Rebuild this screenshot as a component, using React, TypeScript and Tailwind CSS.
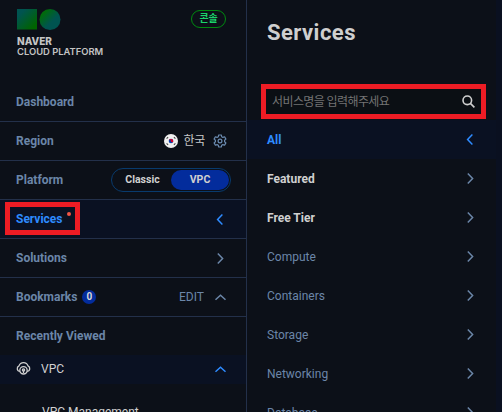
import type { ReactNode } from "react";

type Direction = "left" | "right" | "up";

const chevronPaths: Record<Direction, string> = {
  left: "M8.4 1.6 3.6 6.5l4.8 4.9",
  right: "M3.8 1.6l4.8 4.9-4.8 4.9",
  up: "M1.5 8.8 6.5 4.3 11.5 8.8",
};

function Chevron({ dir, className = "" }: { dir: Direction; className?: string }) {
  return (
    <svg viewBox="0 0 13 13" className={`h-[13px] w-[13px] shrink-0 ${className}`} fill="none" stroke="currentColor" strokeWidth="1.5">
      <path d={chevronPaths[dir]} />
    </svg>
  );
}

function Logo() {
  return (
    <svg viewBox="0 0 44 21" className="h-[21px] w-11">
      <defs>
        <linearGradient id="sq" x1="0" y1="0" x2="1" y2="1">
          <stop offset="0.2" stopColor="#005450" />
          <stop offset="0.85" stopColor="#006400" />
        </linearGradient>
        <linearGradient id="ci" x1="0" y1="0" x2="1" y2="1">
          <stop offset="0.2" stopColor="#006b0c" />
          <stop offset="0.6" stopColor="#005450" />
        </linearGradient>
      </defs>
      <rect width="20" height="20.5" fill="url(#sq)" />
      <circle cx="33" cy="10.5" r="10.5" fill="url(#ci)" />
    </svg>
  );
}

function KoreaFlag() {
  return (
    <svg viewBox="0 0 14 14" className="h-3.5 w-3.5">
      <circle cx="7" cy="7" r="7" fill="#f0f0f0" />
      <circle cx="7" cy="7" r="2.3" fill="#0b3fa8" />
      <path d="M4.7 7.2a2.3 2.3 0 0 1 4.6 0 1.15 1.15 0 0 1-2.3 0 1.15 1.15 0 0 0-2.3 0z" fill="#d80027" />
      <path d="M2.6 4.7l1.5-1.5M9.900 3.200l1.500 1.500M2.600 9.300l1.500 1.500M9.900 10.800l1.500-1.500" stroke="#444" strokeWidth="1.1" />
    </svg>
  );
}

function Gear() {
  return (
    <svg viewBox="0 0 14 14" className="h-3.5 w-3.5 text-[#6b8bb0]" fill="none" stroke="currentColor" strokeWidth="1.2" strokeLinejoin="round">
      <path d="M5.700 1h2.600l.400 1.700 1.200.700 1.700-.600 1.300 2.300-1.300 1.200v1.400l1.300 1.200-1.300 2.300-1.700-.600-1.200.700L8.300 13H5.700l-.400-1.700-1.200-.700-1.700.600-1.300-2.300 1.300-1.200V6.300L1.100 5.100l1.300-2.300 1.700.600 1.200-.700z" />
      <circle cx="7" cy="7" r="1.900" />
    </svg>
  );
}

function CloudIcon() {
  return (
    <svg viewBox="0 0 15 14" className="h-3.5 w-[15px] -translate-y-px" fill="none" stroke="currentColor" strokeWidth="1.3">
      <path d="M3.800 10.600A3 3 0 0 1 3 4.900 4.700 4.700 0 0 1 12 4.900a3 3 0 0 1-.800 5.700" />
      <circle cx="7.500" cy="9.300" r="3.700" />
      <circle cx="7.500" cy="9" r="1.100" />
      <path d="M7.500 9.500v2.500" />
    </svg>
  );
}

function NavRow({ label, active, extra, children }: { label: string; active?: boolean; extra?: ReactNode; children?: ReactNode }) {
  return (
    <div className={`flex h-[39px] items-center border-b border-[#23304a] pr-[19px] pl-4 ${active ? "bg-[#0a1122]" : ""}`}>
      <span className={`font-bold ${active ? "text-[#2e8bff]" : "text-[#6b86a8]"}`}>{label}</span>
      {extra}
      <div className="ml-auto flex items-center">{children}</div>
    </div>
  );
}

const services = [
  { name: "Featured", strong: true },
  { name: "Free Tier", strong: true },
  { name: "Compute" },
  { name: "Containers" },
  { name: "Storage" },
  { name: "Networking" },
  { name: "Database" },
];

export default function App() {
  return (
    <div className="relative flex h-[412px] w-[502px] overflow-hidden bg-[#0a1020] font-['Roboto','Noto_Sans_CJK_KR',sans-serif] text-[12px] leading-4">
      <aside className="w-[247px] shrink-0 border-r border-[#23304a] bg-[#0c1018]">
        <header className="flex h-[83px] items-start justify-between pt-[9px] pr-5 pl-[17px]">
          <div>
            <Logo />
            <div className="mt-[6px] font-['Inter',sans-serif] text-[10px] leading-[10.500px] text-[#c4c4c4]">
              <div className="font-extrabold">NAVER</div>
              <div className="text-[9.400px] font-semibold">CLOUD PLATFORM</div>
            </div>
          </div>
          <span className="mt-px flex h-[18px] w-[35px] items-center justify-center rounded-full border border-[#008a10] text-[10px] font-bold tracking-[-0.200px] text-[#1bd36b]">콘솔</span>
        </header>
        <NavRow label="Dashboard" />
        <NavRow label="Region">
          <KoreaFlag />
          <span className="mr-2 ml-[6px] tracking-[-0.300px] text-[#c8c8c8]">한국</span>
          <Gear />
        </NavRow>
        <NavRow label="Platform">
          <div className="-mr-[4px] flex h-6 w-[120px] items-center rounded-full border border-[#083a6c] p-px text-[10.500px] font-bold text-[#d0d0d0]">
            <span className="flex-1 pl-px text-center">Classic</span>
            <span className="flex h-5 w-[58px] items-center justify-center rounded-full bg-[#032c9c]">VPC</span>
          </div>
        </NavRow>
        <NavRow label="Services" active extra={<i className="mb-[10px] ml-1 h-1 w-1 rounded-full bg-[#f25545]" />}>
          <Chevron dir="left" className="text-[#2e8bff]" />
        </NavRow>
        <NavRow label="Solutions">
          <Chevron dir="right" className="text-[#6b86a8]" />
        </NavRow>
        <NavRow
          label="Bookmarks"
          extra={<span className="ml-[5px] flex h-3.5 w-3.5 items-center justify-center rounded-full bg-[#032c9c] text-[10px] font-bold text-[#d8d8d8]">0</span>}
        >
          <span className="mr-[10px] text-[#6b86a8]">EDIT</span>
          <Chevron dir="up" className="text-[#6b86a8]" />
        </NavRow>
        <div className="flex h-[38px] items-center pl-4 font-bold text-[#6b86a8]">Recently Viewed</div>
        <div className="flex h-[29px] items-center bg-[#0a1122] pr-[19px] pb-px pl-4 text-[#d0d0d0]">
          <CloudIcon />
          <span className="ml-[10px]">VPC</span>
          <Chevron dir="up" className="ml-auto text-[#2e8bff]" />
        </div>
        <div className="pt-5 pl-[42px] text-[#d0d0d0]">VPC Management</div>
      </aside>

      <main className="w-[249px] shrink-0 bg-[#0c1018]">
        <h1 className="h-[84px] pt-[19px] pl-5 text-[22px] leading-7 font-bold tracking-[0.450px] text-[#cfcfcf]">Services</h1>
        <div className="ml-[14px] flex h-[35px] w-[225px] items-center justify-between border-[5px] border-[#ed1c24] bg-[#0b0f14] pr-[6px] pl-[6px]">
          <span className="text-[12px] tracking-[-0.600px] text-[#737373]">서비스명을 입력해주세요</span>
          <svg viewBox="0 0 13 13" className="h-[13px] w-[13px]" fill="none" stroke="#d0d0d0" strokeWidth="1.600">
            <circle cx="5.300" cy="5.300" r="4.300" />
            <path d="M8.400 8.400 12.400 12.400" />
          </svg>
        </div>
        <div className="mt-px flex h-[39px] items-center justify-between bg-[#0a1122] pr-[19px] pl-5 font-bold text-[#2e8bff]">
          All
          <Chevron dir="left" />
        </div>
        {services.map((s) => (
          <div key={s.name} className="flex h-[39px] items-center justify-between pr-[19px] pl-5">
            <span className={s.strong ? "font-bold text-[#d0d0d0]" : "text-[#6b86a8]"}>{s.name}</span>
            <Chevron dir="right" className="text-[#6b86a8]" />
          </div>
        ))}
      </main>

      <div className="absolute top-[202px] left-[5px] h-[33px] w-[75px] border-[5px] border-[#ed1c24]" />
    </div>
  );
}
